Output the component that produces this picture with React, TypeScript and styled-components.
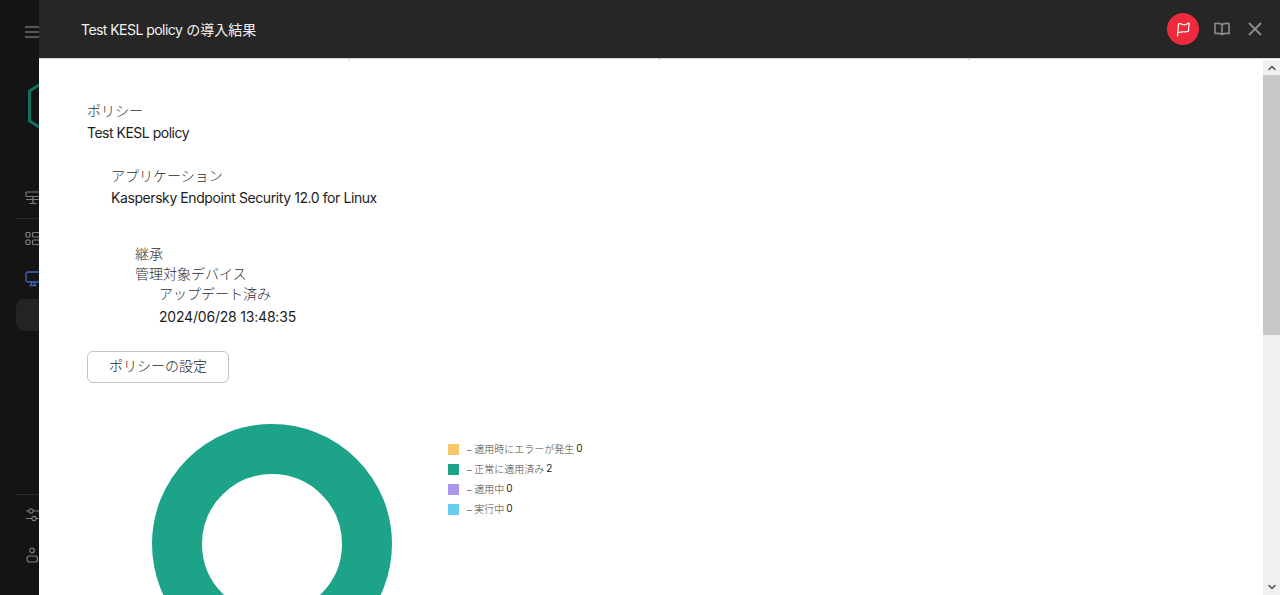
import React from 'react';
import styled, { createGlobalStyle } from 'styled-components';
import { ChevronUp, ChevronDown } from 'lucide-react';

const GlobalStyle = createGlobalStyle`
  html, body {
    margin: 0;
    padding: 0;
    height: 100%;
    overflow: hidden;
    background: #141414;
    font-family: Inter, "Noto Sans CJK JP", sans-serif;
  }
`;

const Page = styled.div`
  display: flex;
  width: 1280px;
  height: 595px;
  overflow: hidden;
`;

const Sidebar = styled.aside`
  flex: 0 0 39px;
  height: 595px;
  overflow: hidden;
  background: #141414;
`;

const SidebarInner = styled.div`
  display: flex;
  flex-direction: column;
  width: 200px;
  height: 595px;
  padding-left: 16px;
  box-sizing: border-box;
`;

const NavIcon = styled.div<{ $top: number; $color?: string }>`
  display: flex;
  margin: ${(p) => p.$top}px 0 0 9px;
  color: ${(p) => p.$color || '#7d7d7d'};
  height: 16px;
`;

const Logo = styled.svg`
  display: block;
  flex: none;
  margin: 30px 0 0 12px;
`;

const SideDivider = styled.div<{ $top: number }>`
  height: 1px;
  margin-top: ${(p) => p.$top}px;
  background: #2b2b2b;
`;

const ActiveRow = styled.div`
  height: 32px;
  margin-top: 12px;
  border-radius: 8px;
  background: #232323;
`;

const Drawer = styled.main`
  flex: 1;
  display: flex;
  flex-direction: column;
  min-width: 0;
  height: 595px;
`;

const Header = styled.header`
  flex: 0 0 58px;
  display: flex;
  align-items: center;
  justify-content: space-between;
  padding: 0 18px 0 42px;
  background: #262626;
`;

const Title = styled.h1`
  margin: 0;
  font-size: 14px;
  font-weight: 400;
  color: #f2f2f2;
`;

const Latin = styled.span<{ $spacing: number }>`
  letter-spacing: ${(p) => p.$spacing}px;
`;

const HeaderActions = styled.div`
  display: flex;
  align-items: center;
  color: #8a8a8a;
`;

const FlagButton = styled.div`
  display: flex;
  align-items: center;
  justify-content: center;
  width: 32px;
  height: 32px;
  margin-right: 15px;
  border-radius: 50%;
  background: #ee2a3c;
`;

const IconButton = styled.div<{ $gap?: number }>`
  display: flex;
  margin-right: ${(p) => p.$gap || 0}px;
`;

const Ticks = styled.div`
  flex: 0 0 2px;
  display: flex;
  gap: 309px;
  padding-left: 310px;
  background: #fff;
  border-top: 1px solid #d4d4d4;
  box-sizing: border-box;
`;

const Tick = styled.span`
  width: 1px;
  height: 1px;
  background: #9a9a9a;
`;

const Body = styled.div`
  flex: 1;
  display: flex;
  min-height: 0;
  background: #fff;
`;

const Content = styled.div`
  flex: 1;
  overflow: hidden;
  padding: 40px 0 0 48px;
  color: #1d1d1b;
`;

const Label = styled.div<{ $tight?: boolean }>`
  font-size: 14px;
  line-height: ${(p) => (p.$tight ? 20 : 22)}px;
  font-weight: 300;
  color: #2e2e2e;
`;

const Value = styled.div<{ $spacing: number }>`
  font-size: 14px;
  line-height: 22px;
  letter-spacing: ${(p) => p.$spacing}px;
  color: #1d1d1b;
`;

const Indented = styled.div<{ $top: number }>`
  margin: ${(p) => p.$top}px 0 0 24px;
`;

const DateValue = styled(Value)`
  margin-top: 2px;
`;

const Button = styled.button`
  display: block;
  width: 142px;
  height: 32px;
  margin-top: 23px;
  padding: 0 0 4px;
  border: 1px solid #c4c4c4;
  border-radius: 6px;
  background: #fff;
  font: inherit;
  font-size: 14px;
  font-weight: 300;
  color: #1d1d1b;
`;

const ChartRow = styled.div`
  display: flex;
  align-items: flex-start;
  margin-top: 41px;
  padding-left: 65px;
`;

const Legend = styled.ul`
  display: flex;
  flex-direction: column;
  gap: 9px;
  margin: 20px 0 0 56px;
  padding: 0;
  list-style: none;
`;

const LegendItem = styled.li`
  display: flex;
  align-items: center;
  height: 11px;
  font-size: 10px;
  font-weight: 300;
  color: #444;
`;

const Swatch = styled.span<{ $color: string }>`
  width: 11px;
  height: 11px;
  margin-right: 7px;
  background: ${(p) => p.$color};
`;

const LegendText = styled.span`
  margin-bottom: 3px;
  word-spacing: -1px;
`;

const Count = styled.span`
  margin: 0 0 3px 2px;
  font-weight: 400;
  color: #1d1d1b;
`;

const Scrollbar = styled.div`
  flex: 0 0 17px;
  display: flex;
  flex-direction: column;
  background: #f0f0f0;
  color: #505050;
`;

const ScrollArrow = styled.div<{ $height: number }>`
  flex: 0 0 ${(p) => p.$height}px;
  display: flex;
  align-items: center;
  justify-content: center;
`;

const ScrollThumb = styled.div`
  flex: 0 0 260px;
  background: #c8c8c8;
`;

const ScrollSpace = styled.div`
  flex: 1;
`;

const legend = [
  { color: '#f6c76b', label: '適用時にエラーが発生', count: 0 },
  { color: '#1ca388', label: '正常に適用済み', count: 2 },
  { color: '#ab96ec', label: '適用中', count: 0 },
  { color: '#66ccf0', label: '実行中', count: 0 },
];

const App: React.FC = () => (
  <Page>
    <GlobalStyle />
    <Sidebar>
      <SidebarInner>
        <NavIcon $top={24} $color="#6e6e6e">
          <svg width="16" height="16" viewBox="0 0 16 16" fill="none" stroke="currentColor" strokeWidth="1.7">
            <path d="M0 3h16M0 8h16M0 13h16" />
          </svg>
        </NavIcon>
        <Logo width="30" height="72" viewBox="0 0 30 72" fill="none">
          <path d="M21.500 8.300 1.500 21v30l20 12.700" stroke="#17705f" strokeWidth="3" />
        </Logo>
        <NavIcon $top={48}>
          <svg width="16" height="16" viewBox="0 0 16 16" fill="none" stroke="currentColor" strokeWidth="1.2">
            <rect x="1" y="2" width="14" height="4.500" rx="1" />
            <path d="M1 9.500h14M8 6.500v7M4.500 13.500h7" />
          </svg>
        </NavIcon>
        <SideDivider $top={12} />
        <NavIcon $top={12}>
          <svg width="16" height="16" viewBox="0 0 16 16" fill="none" stroke="currentColor" strokeWidth="1.2">
            <rect x="1" y="1.500" width="4" height="4.500" rx="1" />
            <rect x="7.500" y="1.500" width="7" height="4.500" rx="1" />
            <rect x="1" y="9" width="4" height="4.500" rx="1" />
            <rect x="7.500" y="9" width="7" height="4.500" rx="1" />
          </svg>
        </NavIcon>
        <NavIcon $top={24} $color="#3f68b5">
          <svg width="16" height="16" viewBox="0 0 16 16" fill="none" stroke="currentColor" strokeWidth="1.3">
            <rect x="1" y="1" width="14" height="10" rx="2" />
            <path d="M6.500 11v3M9.500 11v3M4.500 14.500h7" />
          </svg>
        </NavIcon>
        <ActiveRow />
        <SideDivider $top={163} />
        <NavIcon $top={12}>
          <svg width="16" height="16" viewBox="0 0 16 16" fill="none" stroke="currentColor" strokeWidth="1.2">
            <path d="M1 4h3M8 4h8M1 11.500h6M11 11.500h5" />
            <circle cx="6" cy="4" r="2.200" />
            <circle cx="9" cy="11.500" r="2.200" />
          </svg>
        </NavIcon>
        <NavIcon $top={24}>
          <svg width="16" height="16" viewBox="0 0 16 16" fill="none" stroke="currentColor" strokeWidth="1.2">
            <circle cx="7" cy="3.500" r="2.300" />
            <rect x="2" y="9" width="10.500" height="6" rx="2.600" />
          </svg>
        </NavIcon>
      </SidebarInner>
    </Sidebar>
    <Drawer>
      <Header>
        <Title>
          <Latin $spacing={-0.55}>Test KESL policy</Latin> の導入結果
        </Title>
        <HeaderActions>
          <FlagButton>
            <svg width="14" height="15" viewBox="0 0 14 15" fill="none" stroke="#fff" strokeWidth="1.2">
              <path d="M1.500 14.500 2.500 2C5 .8 6.500 3 8.500 2.800S11.500 1.500 13 1l-.5 8c-2.500 1.500-4.500.5-6 .8S4 10 2 10.500" />
            </svg>
          </FlagButton>
          <IconButton $gap={18}>
            <svg width="16" height="16" viewBox="0 0 16 16" fill="none" stroke="currentColor" strokeWidth="1.6">
              <path d="M8 3.500C6.500 2.500 4 2.200 1 2.500v10c3-.3 5.500 0 7 1 1.500-1 4-1.300 7-1v-10c-3-.3-5.500 0-7 1ZM8 3.500v10" />
            </svg>
          </IconButton>
          <IconButton>
            <svg width="14" height="14" viewBox="0 0 14 14" fill="none" stroke="currentColor" strokeWidth="2">
              <path d="M1 1l12 12M13 1 1 13" />
            </svg>
          </IconButton>
        </HeaderActions>
      </Header>
      <Ticks>
        <Tick />
        <Tick />
        <Tick />
      </Ticks>
      <Body>
        <Content>
          <Label>ポリシー</Label>
          <Value $spacing={-0.5}>Test KESL policy</Value>
          <Indented $top={21}>
            <Label>アプリケーション</Label>
            <Value $spacing={-0.42}>Kaspersky Endpoint Security 12.0 for Linux</Value>
            <Indented $top={35}>
              <Label $tight>継承</Label>
              <Label $tight>管理対象デバイス</Label>
              <Indented $top={0}>
                <Label $tight>アップデート済み</Label>
                <DateValue $spacing={-0.2}>2024/06/28 13:48:35</DateValue>
              </Indented>
            </Indented>
          </Indented>
          <Button>ポリシーの設定</Button>
          <ChartRow>
            <svg width="240" height="240" viewBox="0 0 240 240">
              <circle cx="120" cy="120" r="95" fill="none" stroke="#1ca388" strokeWidth="50" />
            </svg>
            <Legend>
              {legend.map((item) => (
                <LegendItem key={item.label}>
                  <Swatch $color={item.color} />
                  <LegendText>− {item.label}</LegendText>
                  <Count>{item.count}</Count>
                </LegendItem>
              ))}
            </Legend>
          </ChartRow>
        </Content>
        <Scrollbar>
          <ScrollArrow $height={15}>
            <ChevronUp size={12} strokeWidth={3} />
          </ScrollArrow>
          <ScrollThumb />
          <ScrollSpace />
          <ScrollArrow $height={17}>
            <ChevronDown size={12} strokeWidth={3} />
          </ScrollArrow>
        </Scrollbar>
      </Body>
    </Drawer>
  </Page>
);

export default App;
